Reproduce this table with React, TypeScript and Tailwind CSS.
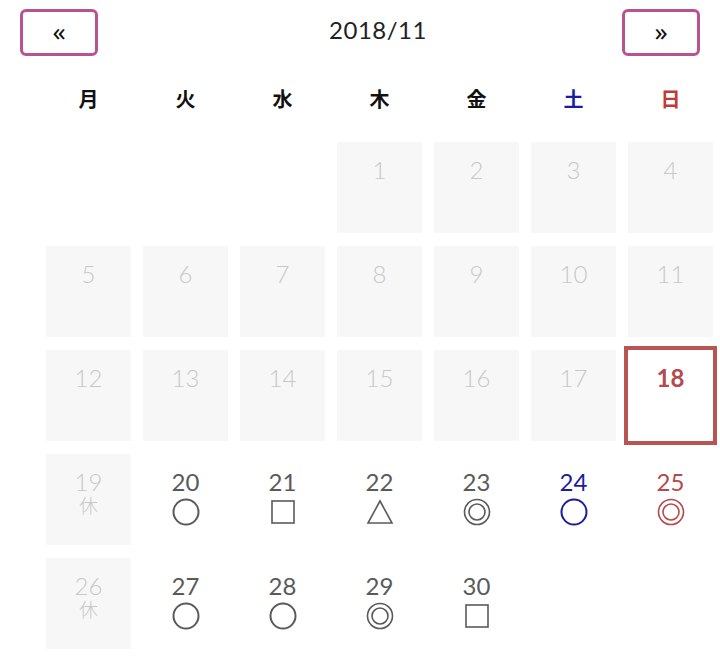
import React from 'react';

type Mark = 'circle' | 'double' | 'square' | 'triangle';

interface Day {
  day: number;
  past?: boolean;
  closed?: boolean;
  today?: boolean;
  mark?: Mark;
}

const weekdays = [
  { label: '月', color: 'text-[#111111]' },
  { label: '火', color: 'text-[#111111]' },
  { label: '水', color: 'text-[#111111]' },
  { label: '木', color: 'text-[#111111]' },
  { label: '金', color: 'text-[#111111]' },
  { label: '土', color: 'text-[#1c1c9c]' },
  { label: '日', color: 'text-[#c23a33]' },
];

// 2018/11 starts on Thursday (3 empty slots)
const days: (Day | null)[] = [
  null, null, null,
  ...Array.from({ length: 17 }, (_, i) => ({ day: i + 1, past: true }) as Day),
  { day: 18, today: true },
  { day: 19, past: true, closed: true },
  { day: 20, mark: 'circle' },
  { day: 21, mark: 'square' },
  { day: 22, mark: 'triangle' },
  { day: 23, mark: 'double' },
  { day: 24, mark: 'circle' },
  { day: 25, mark: 'double' },
  { day: 26, past: true, closed: true },
  { day: 27, mark: 'circle' },
  { day: 28, mark: 'circle' },
  { day: 29, mark: 'double' },
  { day: 30, mark: 'square' },
];

const MarkIcon = ({ mark, color }: { mark: Mark; color: string }) => (
  <svg width="30" height="30" viewBox="0 0 30 30" fill="none" stroke={color} className="mx-auto block">
    {mark === 'circle' && <circle cx="15" cy="15" r="12.5" strokeWidth="2" />}
    {mark === 'double' && (
      <>
        <circle cx="15" cy="15" r="12.5" strokeWidth="1.6" />
        <circle cx="15" cy="15" r="8" strokeWidth="1.6" />
      </>
    )}
    {mark === 'square' && <rect x="4" y="4" width="22" height="22" strokeWidth="1.6" />}
    {mark === 'triangle' && <polygon points="15,4 3,26 27,26" strokeWidth="1.6" strokeLinejoin="miter" />}
  </svg>
);

const DayCell = ({ d, col }: { d: Day | null; col: number }) => {
  if (!d) return <div className="h-[91px]" />;

  if (d.today) {
    return (
      <div className="h-[91px] bg-white outline-4 outline-solid outline-[#b85452] pt-[15px] text-center">
        <div className="text-[24px] leading-[26px] font-bold text-[#b5494b]">{d.day}</div>
      </div>
    );
  }

  if (d.past) {
    return (
      <div className="h-[91px] bg-[#f7f7f7] pt-[15px] text-center text-[#c8c8c8]">
        <div className="text-[24px] leading-[26px] font-light">{d.day}</div>
        {d.closed && <div className="text-[19px] leading-[22px] font-light">休</div>}
      </div>
    );
  }

  const color = col === 5 ? '#1c1c9c' : col === 6 ? '#b5494b' : '#5a5a5a';
  const textColor = col === 5 ? 'text-[#1c1c9c]' : col === 6 ? 'text-[#b5494b]' : 'text-[#5a5a5a]';

  return (
    <div className="h-[91px] pt-[15px] text-center">
      <div className={`text-[24px] leading-[26px] font-normal ${textColor}`}>{d.day}</div>
      {d.mark && (
        <div className="mt-[2px]">
          <MarkIcon mark={d.mark} color={color} />
        </div>
      )}
    </div>
  );
};

export default function App() {
  return (
    <div
      className="w-[720px] h-[660px] bg-white overflow-hidden"
      style={{ fontFamily: 'Lato, "Noto Sans CJK JP", sans-serif' }}
    >
      {/* ヘッダー */}
      <div className="flex items-center justify-between px-[20px] pt-[9px]">
        <button
          className="w-[78px] h-[47px] border-[3px] border-[#b8538f] rounded-[6px] flex items-center justify-center text-[26px] text-[#111] leading-none pb-[4px]"
          style={{ fontFamily: '"Noto Sans", sans-serif' }}
        >
          «
        </button>
        <div className="flex-1 text-center pl-[36px] pb-[5px] text-[24px] text-[#222] tracking-[0.5px]">2018/11</div>
        <button
          className="w-[78px] h-[47px] border-[3px] border-[#b8538f] rounded-[6px] flex items-center justify-center text-[26px] text-[#111] leading-none pb-[4px]"
          style={{ fontFamily: '"Noto Sans", sans-serif' }}
        >
          »
        </button>
      </div>

      {/* 曜日 */}
      <div className="grid grid-cols-7 gap-x-[12px] ml-[46px] w-[667px] mt-[28px]">
        {weekdays.map((w) => (
          <div
            key={w.label}
            className={`text-center text-[20px] leading-[30px] font-bold ${w.color}`}
            style={{ fontFamily: '"Noto Sans CJK JP", sans-serif' }}
          >
            {w.label}
          </div>
        ))}
      </div>

      {/* 日付 */}
      <div className="grid grid-cols-7 gap-x-[12px] gap-y-[13px] ml-[46px] w-[667px] mt-[28px]">
        {days.map((d, i) => (
          <DayCell key={i} d={d} col={i % 7} />
        ))}
      </div>
    </div>
  );
}
